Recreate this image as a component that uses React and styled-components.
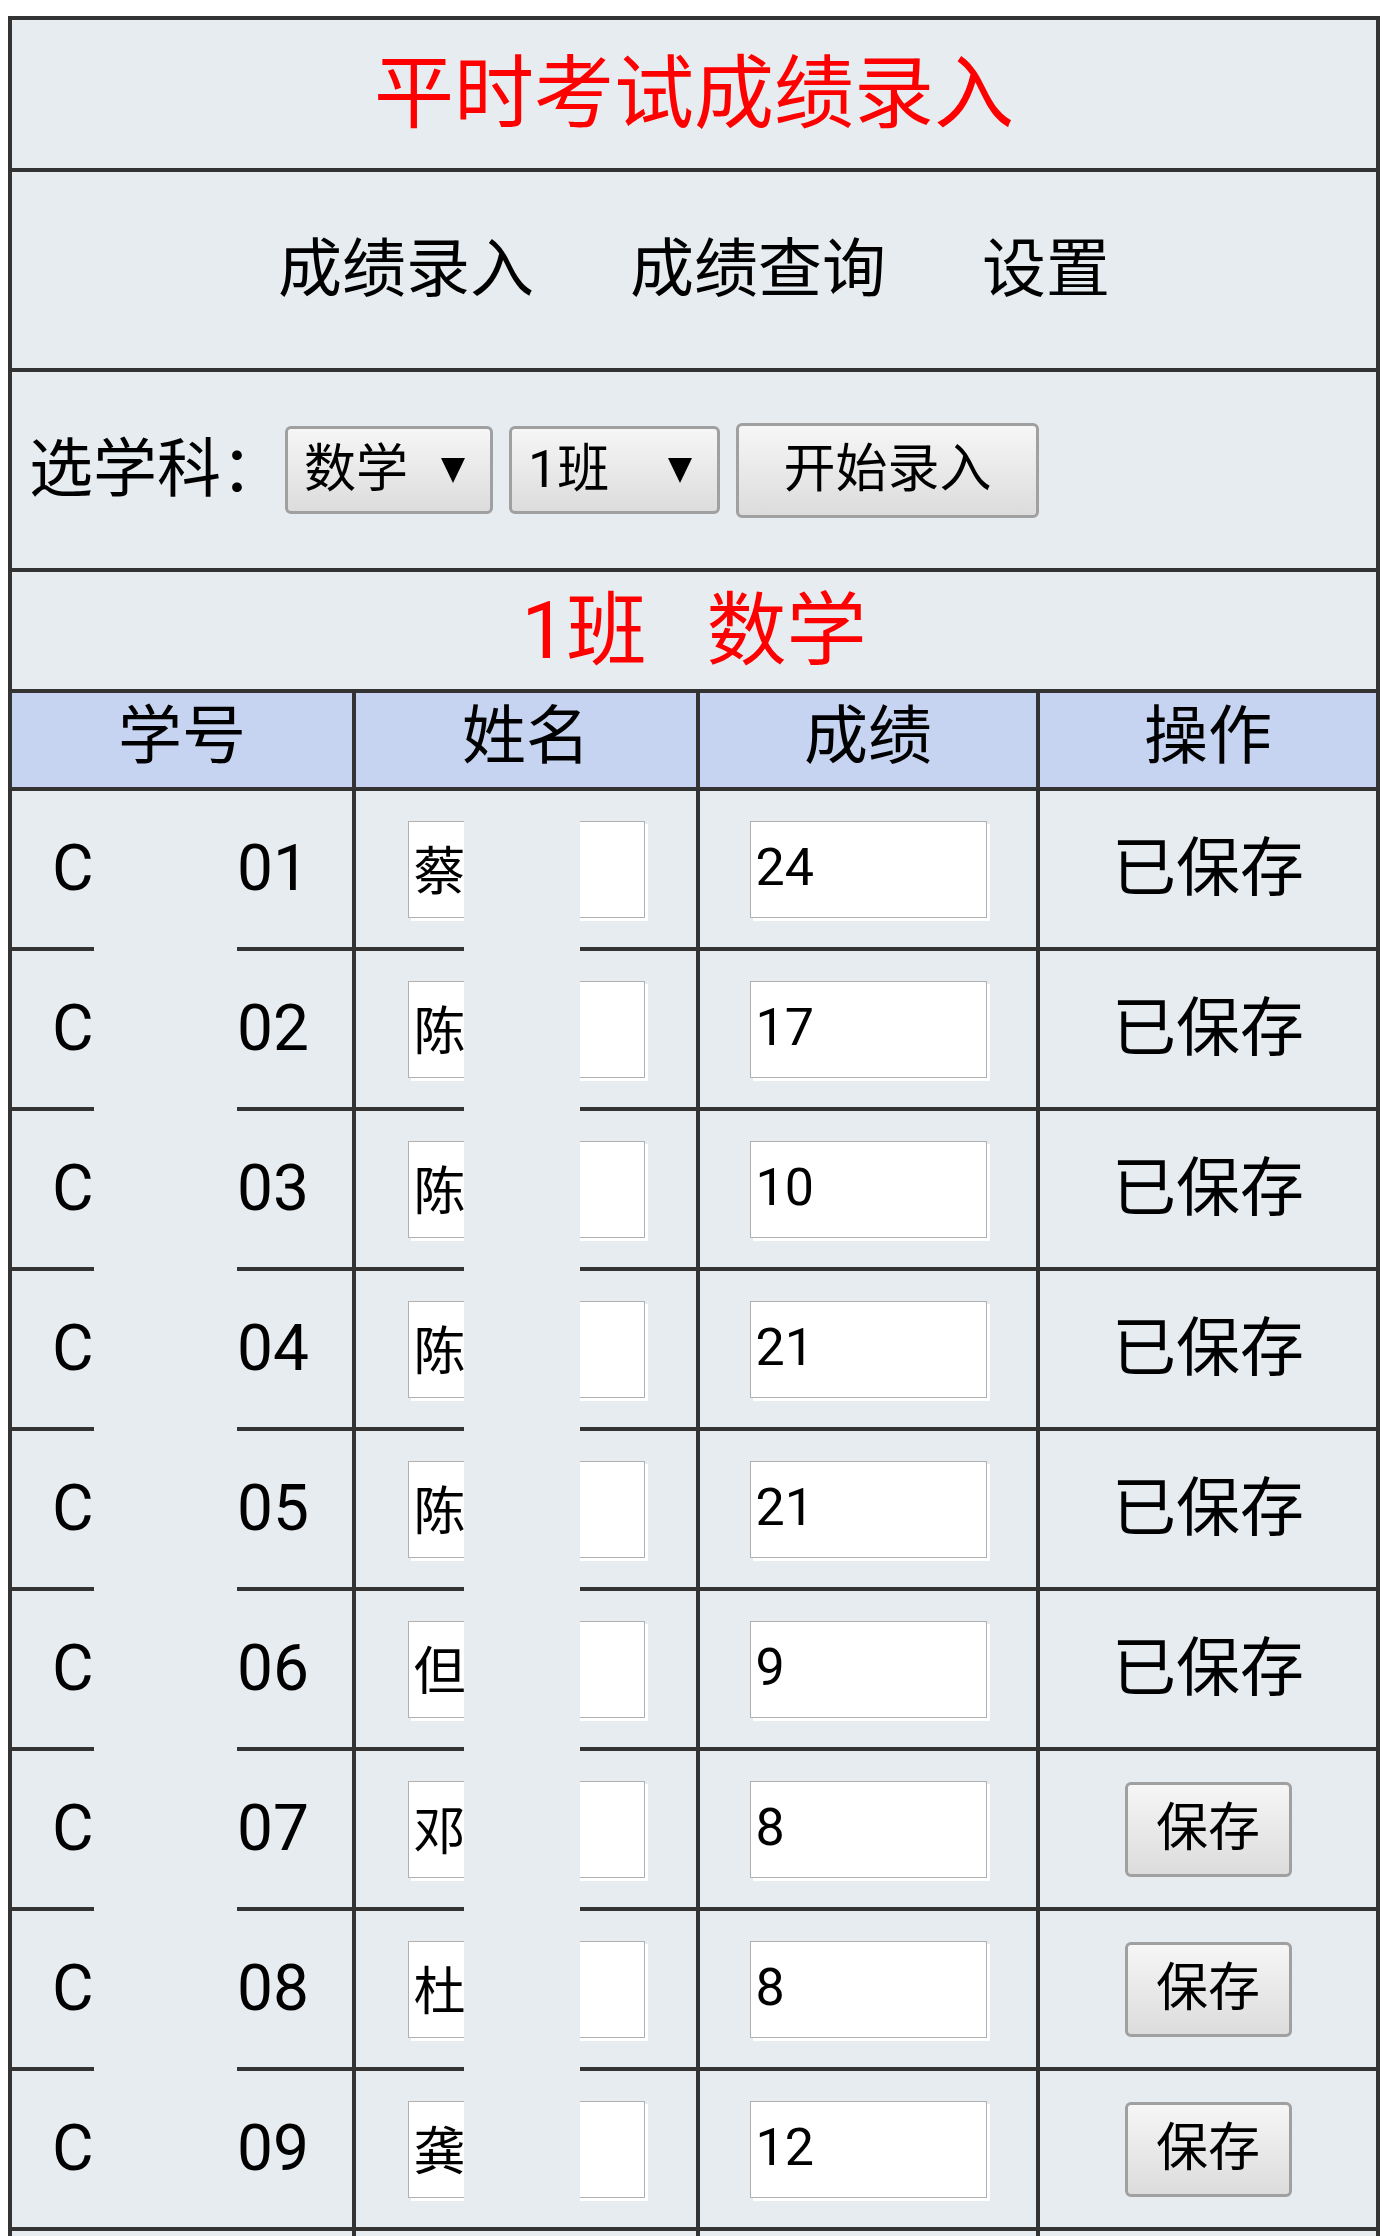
import React from "react";
import styled, { createGlobalStyle } from "styled-components";

const GlobalStyle = createGlobalStyle`
  body {
    margin: 0;
    background: #fff;
    font-family: Roboto, "Noto Sans CJK SC", sans-serif;
  }
`;

const students = [
  { no: "01", name: "蔡", score: "24", saved: true },
  { no: "02", name: "陈", score: "17", saved: true },
  { no: "03", name: "陈", score: "10", saved: true },
  { no: "04", name: "陈", score: "21", saved: true },
  { no: "05", name: "陈", score: "21", saved: true },
  { no: "06", name: "但", score: "9", saved: true },
  { no: "07", name: "邓", score: "8", saved: false },
  { no: "08", name: "杜", score: "8", saved: false },
  { no: "09", name: "龚", score: "12", saved: false },
];

const columns = ["学号", "姓名", "成绩", "操作"];

function App() {
  return (
    <>
      <GlobalStyle />
      <Sheet>
        <Title>平时考试成绩录入</Title>
        <Nav>
          <NavLink>成绩录入</NavLink>
          <NavLink>成绩查询</NavLink>
          <NavLink>设置</NavLink>
        </Nav>
        <Toolbar>
          <Label>选学科：</Label>
          <Controls>
            <Picker $w={208}>
              <span>数学</span>
              <Caret />
            </Picker>
            <Picker $w={211}>
              <span>1班</span>
              <Caret />
            </Picker>
            <Button $w={303}>开始录入</Button>
          </Controls>
        </Toolbar>
        <Caption>
          <span>1班</span>
          <span>数学</span>
        </Caption>
        <HeadRow>
          {columns.map((c) => (
            <HeadCell key={c}>{c}</HeadCell>
          ))}
        </HeadRow>
        <Body>
          {students.map((s) => (
            <Row key={s.no}>
              <IdCell>
                <IdPrefix>C</IdPrefix>
                <span>{s.no}</span>
              </IdCell>
              <Cell>
                <Field readOnly defaultValue={s.name} />
              </Cell>
              <Cell>
                <Field readOnly defaultValue={s.score} />
              </Cell>
              <Cell>
                {s.saved ? <Saved>已保存</Saved> : <Button $w={167}>保存</Button>}
              </Cell>
            </Row>
          ))}
          {/* next row starts just below the fold */}
          <Row>
            <Cell />
            <Cell />
            <Cell />
            <Cell />
          </Row>
          <Redaction $left={82} $w={143} />
          <Redaction $left={452} $w={116} />
        </Body>
      </Sheet>
    </>
  );
}

export default App;

const Sheet = styled.div`
  box-sizing: border-box;
  width: 1372px;
  margin: 16px 0 0 8px;
  border: 4px solid #333;
  background: #333;
  display: flex;
  flex-direction: column;
  gap: 4px;
  color: #000;
  font-family: Roboto, "Noto Sans CJK SC", sans-serif;
`;

const Title = styled.div`
  height: 148px;
  background: #e6ecef;
  display: flex;
  align-items: center;
  justify-content: center;
  font-size: 80px;
  line-height: 1;
  color: #ff0000;
`;

const Nav = styled.div`
  height: 196px;
  background: #e6ecef;
  display: flex;
  align-items: center;
  justify-content: center;
  gap: 96px;
  font-size: 64px;
  line-height: 1;
`;

const NavLink = styled.span`
  cursor: pointer;
  color: #000;
`;

const Toolbar = styled.div`
  height: 196px;
  background: #e6ecef;
  display: flex;
  align-items: center;
  padding-left: 17px;
  font-size: 64px;
  line-height: 1;
`;

const Label = styled.span`
  white-space: nowrap;
`;

const Controls = styled.div`
  display: flex;
  align-items: center;
  gap: 16px;
`;

const Picker = styled.div`
  box-sizing: border-box;
  width: ${(p) => p.$w}px;
  height: 88px;
  border: 3px solid #a0a0a0;
  border-radius: 6px;
  background: linear-gradient(#f6f6f6, #dcdcdc);
  display: flex;
  align-items: center;
  justify-content: space-between;
  padding: 0 25px 0 16px;
  font-size: 52px;
  line-height: 1;
`;

const Caret = styled.span`
  width: 0;
  height: 0;
  border-left: 12px solid transparent;
  border-right: 12px solid transparent;
  border-top: 25px solid #000;
`;

const Button = styled.button`
  box-sizing: border-box;
  width: ${(p) => p.$w}px;
  height: 95px;
  margin: 0;
  padding: 0;
  border: 3px solid #a0a0a0;
  border-radius: 6px;
  background: linear-gradient(#f6f6f6, #dcdcdc);
  font-family: Roboto, "Noto Sans CJK SC", sans-serif;
  font-size: 52px;
  line-height: 1;
  color: #000;
  cursor: pointer;
`;

const Caption = styled.div`
  height: 117px;
  background: #e6ecef;
  display: flex;
  align-items: center;
  justify-content: center;
  gap: 60px;
  font-size: 80px;
  line-height: 1;
  color: #ff0000;
`;

const grid = `
  display: grid;
  grid-template-columns: 340px 340px 336px 336px;
  gap: 4px;
`;

const HeadRow = styled.div`
  ${grid}
  height: 94px;
`;

const HeadCell = styled.div`
  background: #c6d4f2;
  display: flex;
  align-items: center;
  justify-content: center;
  font-size: 64px;
  line-height: 1;
  padding-bottom: 6px;
`;

const Body = styled.div`
  position: relative;
  display: flex;
  flex-direction: column;
  gap: 4px;
`;

const Row = styled.div`
  ${grid}
  height: 156px;
`;

const Cell = styled.div`
  background: #e6ecef;
  display: flex;
  align-items: center;
  justify-content: center;
  font-size: 64px;
  line-height: 1;
`;

const IdCell = styled(Cell)`
  justify-content: flex-start;
  padding-left: 40px;
`;

const IdPrefix = styled.span`
  display: inline-block;
  width: 185px;
`;

const Field = styled.input`
  box-sizing: border-box;
  width: 237px;
  height: 97px;
  margin: 0;
  padding: 0 0 4px 5px;
  border: 1px solid #b0b0b0;
  border-radius: 0;
  background: #fff;
  box-shadow: 3px 3px 0 #fff;
  font-family: Roboto, "Noto Sans CJK SC", sans-serif;
  font-size: 52px;
  color: #000;
  outline: none;
`;

const Saved = styled.span`
  white-space: nowrap;
`;

const Redaction = styled.div`
  position: absolute;
  top: 0;
  left: ${(p) => p.$left}px;
  width: ${(p) => p.$w}px;
  height: 1436px;
  background: #e6ecef;
`;
